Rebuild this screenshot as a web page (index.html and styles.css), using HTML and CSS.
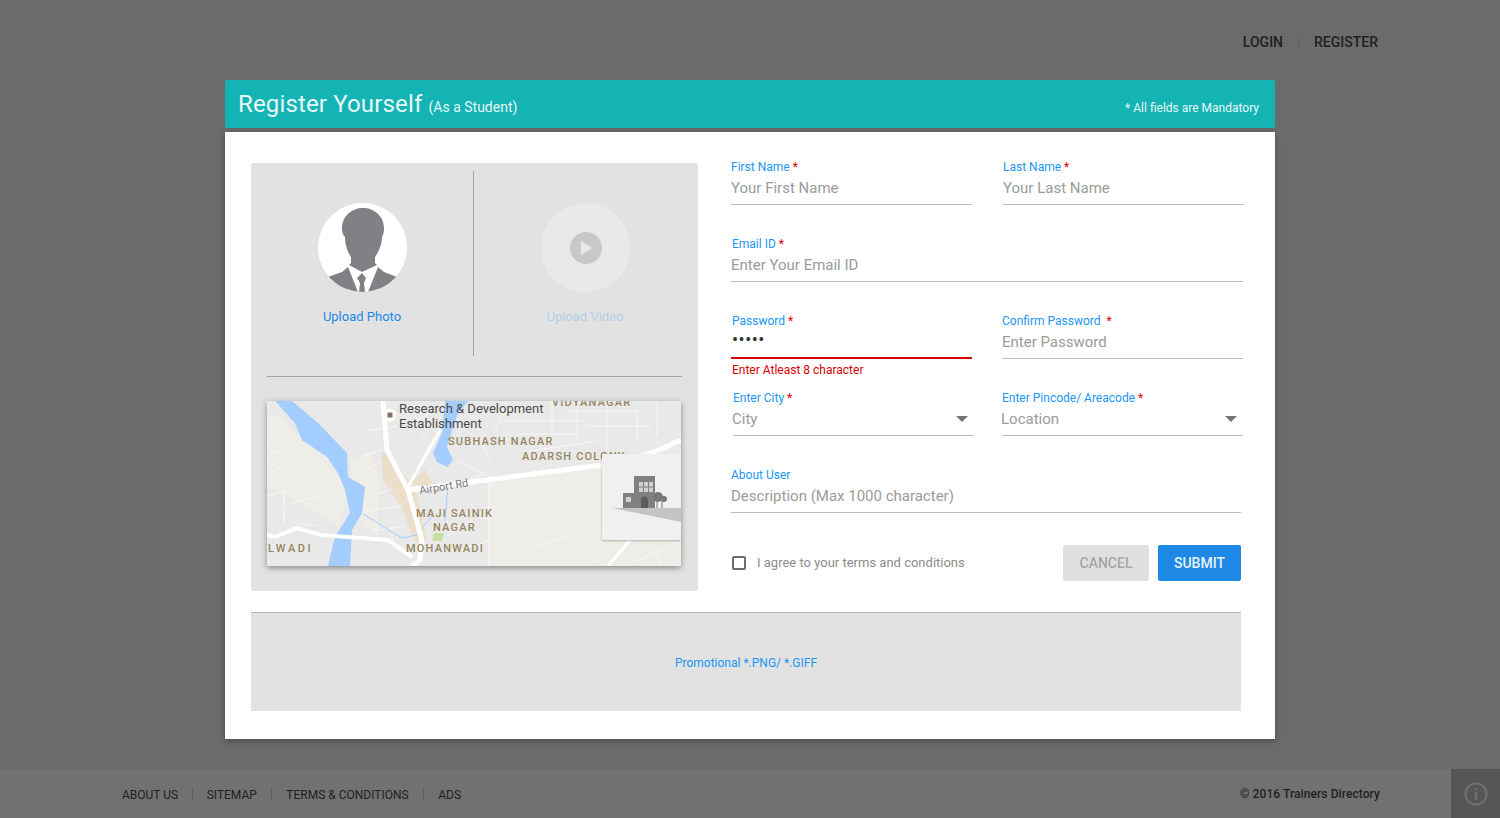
FILE: index.html
```html
<!DOCTYPE html>
<html lang="en">
<head>
  <meta charset="UTF-8" />
  <meta name="viewport" content="width=device-width, initial-scale=1.0"/>
  <title>Register Yourself</title>
  <link rel="stylesheet" href="styles.css">
</head>
<body>
  <header class="topbar">
    <a class="top-link">LOGIN</a>
    <span class="top-sep"></span>
    <a class="top-link">REGISTER</a>
  </header>

  <main class="modal">
    <div class="modal-title">
      <h1>Register Yourself <small>(As a Student)</small></h1>
      <span class="mandatory">* All fields are Mandatory</span>
    </div>

    <div class="card">
      <div class="card-top">
        <!-- Left: uploads and map -->
        <section class="media-panel">
          <div class="uploads">
            <div class="upload upload-photo">
              <svg class="disc" viewBox="0 0 89 89">
                <defs><clipPath id="disc-clip"><circle cx="44.5" cy="44.5" r="44.5"/></clipPath></defs>
                <circle cx="44.5" cy="44.5" r="44.5" fill="#fff"/>
                <g clip-path="url(#disc-clip)" fill="#808184">
                  <path d="M45 5C56 5 66 13 66 25C66 30 65 32 64 34C64 42 60 50 57 54L57 60L59 62L44 69L31 62L33 60L33 54C30 50 27 42 27 34C25 32 24 30 24 25C24 13 34 5 45 5Z"/>
                  <path d="M10 74L24 69L30 64L40 89L10 89Z"/>
                  <path d="M79 74L66 69L60 64L50 89L79 89Z"/>
                  <path d="M39 75L44 70L48 75L46 80L47 89L41 89L42 80Z"/>
                </g>
              </svg>
              <a class="upload-label">Upload Photo</a>
            </div>
            <div class="upload upload-video">
              <svg class="disc" viewBox="0 0 89 89">
                <circle cx="44.5" cy="44.5" r="44.5" fill="#e9e9e9"/>
                <circle cx="45" cy="45" r="16" fill="#c8c8c8"/>
                <path d="M40 38L51 45L40 52Z" fill="#e9e9e9"/>
              </svg>
              <a class="upload-label">Upload Video</a>
            </div>
          </div>

          <div class="map">
            <svg viewBox="0 0 414 165" width="414" height="165">
              <rect width="414" height="165" fill="#e9e9e9"/>
              <path d="M221 82L335 64L414 50V165H221Z" fill="#efede7"/>
              <path d="M0 15H12L35 39L60 56L80 90L72 125L30 100L0 85Z" fill="#efede7"/>
              <path d="M82 60L105 50L112 80L110 130L95 125Z" fill="#efede7"/>
              <path d="M114 52L124 52L150 95L160 140L148 140L134 105L116 78Z" fill="#ecdfc9"/>
              <path d="M142 84L158 68L166 84Z" fill="#ecdfc9"/>
              <path d="M167 132L177 132L175 140H165Z" fill="#c8dfa2"/>

              <g class="streets">
                <path d="M0 45L10 52L18 42M0 60L25 75M0 95L17 90L17 122M17 105L50 95L68 115M30 122L50 125"/>
                <path d="M100 30L130 25M98 55L115 48M95 70L115 60M105 95L125 88M100 110L135 105M105 130L140 125M110 120V140M125 125V140"/>
                <path d="M150 20L165 10M155 40L165 20M190 60L222 75M190 85L222 70M228 30L240 0M210 35L225 60"/>
                <path d="M240 20H320M250 33H310M262 50L330 40M285 0V50M310 0V40M340 0V45M370 10V40M390 0V35M300 10H375M320 25H385"/>
                <path d="M222 82V165M200 100L222 120M180 135L205 120M190 150L222 140"/>
                <path d="M300 150L340 130M320 165L350 140M370 160L414 140M385 150L395 165M270 145L300 135"/>
              </g>
              <g class="canals">
                <path d="M96 113L135 137L150 134L165 115M181 85L178 120"/>
              </g>

              <path d="M61 165L68 136L83 112L78 89L71 72L60 56L35 39L28 22L8 0H25L51 22L80 52L81 76L98 86L95 112L85 129L83 165Z" fill="#a3ccff"/>
              <path d="M178 0H201L191 12L185 29L180 46L186 59L180 66L170 61L166 52L175 32Z" fill="#a3ccff"/>

              <g class="roads">
                <path d="M116 0L120 49L141 89L155 139L153 159L145 165" stroke-width="5"/>
                <path d="M141 89L205 81L335 64L385 52L414 39" stroke-width="5"/>
                <path d="M173 29L141 86" stroke-width="3"/>
                <path d="M0 134L8 136L30 127L55 134L121 139L145 156" stroke-width="4"/>
                <path d="M341 165L363 139" stroke-width="3"/>
              </g>

              <circle cx="123" cy="14" r="6.5" fill="#fff"/>
              <rect x="120.5" y="11.500" width="5" height="5" fill="#8d6e63"/>

              <text class="poi" x="132" y="12">Research &amp; Development</text>
              <text class="poi" x="132" y="27">Establishment</text>
              <text class="area" x="285" y="5">VIDYANAGAR</text>
              <text class="area" x="181" y="44">SUBHASH NAGAR</text>
              <text class="area" x="255" y="59">ADARSH COLONY</text>
              <text class="road-name" transform="translate(153 93) rotate(-9)">Airport Rd</text>
              <text class="area" x="149" y="116">MAJI SAINIK</text>
              <text class="area" x="166" y="130">NAGAR</text>
              <text class="area area-wide" x="1" y="151">LWADI</text>
              <text class="area" x="139" y="151">MOHANWADI</text>

              <!-- building thumbnail in the corner -->
              <rect class="tile" x="335" y="53" width="79" height="86" fill="#f0f0f0"/>
              <path d="M345 107H414V121Z" fill="#c4c4c4"/>
              <rect x="356" y="92" width="11" height="15" fill="#808080"/>
              <rect x="359" y="96" width="5" height="5" fill="#d0d0d0"/>
              <rect x="367" y="75" width="21" height="32" fill="#808080"/>
              <path d="M372 81H386V91H372Z" fill="#d0d0d0"/>
              <path d="M376.500 81V91M381.500 81V91M372 86H386" stroke="#808080" stroke-width="1"/>
              <path d="M374 107V99A3.500 3.500 0 0 1 381 99V107Z" fill="#5c5c5c"/>
              <circle cx="391" cy="96" r="5" fill="#777"/>
              <circle cx="397" cy="98" r="3" fill="#777"/>
              <path d="M390 100V107M395 100V107" stroke="#777" stroke-width="1"/>
            </svg>
          </div>
        </section>

        <!-- Right: the form -->
        <form class="form">
          <div class="row">
            <div class="field">
              <label>First Name <em>*</em></label>
              <div class="control">Your First Name</div>
            </div>
            <div class="field field-last">
              <label>Last Name <em>*</em></label>
              <div class="control">Your Last Name</div>
            </div>
          </div>

          <div class="row">
            <div class="field field-wide">
              <label class="nudge">Email ID <em>*</em></label>
              <div class="control">Enter Your Email ID</div>
            </div>
          </div>

          <div class="row">
            <div class="field">
              <label class="nudge">Password <em>*</em></label>
              <div class="control control-error"><span class="dots">•••••</span></div>
              <p class="error">Enter Atleast 8 character</p>
            </div>
            <div class="field field-second">
              <label>Confirm Password &nbsp;<em>*</em></label>
              <div class="control">Enter Password</div>
            </div>
          </div>

          <div class="row">
            <div class="field field-city">
              <label>Enter City <em>*</em></label>
              <div class="control control-select">City<i class="caret"></i></div>
            </div>
            <div class="field field-area">
              <label>Enter Pincode/ Areacode <em>*</em></label>
              <div class="control control-select">Location<i class="caret"></i></div>
            </div>
          </div>

          <div class="row">
            <div class="field field-about">
              <label>About User</label>
              <div class="control">Description (Max 1000 character)</div>
            </div>
          </div>

          <div class="actions">
            <span class="checkbox"></span>
            <span class="agree">I agree to your terms and conditions</span>
            <button type="button" class="btn btn-cancel">CANCEL</button>
            <button type="button" class="btn btn-submit">SUBMIT</button>
          </div>
        </form>
      </div>

      <div class="promo">Promotional *.PNG/ *.GIFF</div>
    </div>
  </main>

  <footer class="footer">
    <nav class="footer-links">
      <a>ABOUT US</a>
      <a>SITEMAP</a>
      <a>TERMS &amp; CONDITIONS</a>
      <a>ADS</a>
    </nav>
    <span class="copyright">© 2016 Trainers Directory</span>
    <div class="info">
      <svg viewBox="0 0 24 24" width="24" height="24">
        <circle cx="12" cy="12" r="10.500" fill="none" stroke="#707070" stroke-width="2"/>
        <circle cx="12" cy="7" r="1.500" fill="#707070"/>
        <rect x="10.800" y="10" width="2.400" height="8" fill="#707070"/>
      </svg>
    </div>
  </footer>
</body>
</html>
```

FILE: styles.css
```css
* {
  box-sizing: border-box;
}

body {
  display: flex;
  flex-direction: column;
  height: 100vh;
  margin: 0;
  overflow: hidden;
  background: #6b6b6b;
  font-family: Roboto, 'Liberation Sans', sans-serif;
}

/* Top bar */
.topbar {
  display: flex;
  justify-content: flex-end;
  align-items: center;
  height: 80px;
  padding: 4px 122px 0 0;
}

.top-link {
  font-size: 14px;
  font-weight: 500;
  color: #1f1f1f;
}

.top-sep {
  width: 1px;
  height: 12px;
  margin: 2px 15px 0;
  background: #5e5e5e;
}

/* Modal */
.modal {
  width: 1050px;
  margin: 0 auto;
}

.modal-title {
  display: flex;
  justify-content: space-between;
  align-items: baseline;
  height: 48px;
  padding: 10px 16px 0 13px;
  background: #14b3b4;
  border-radius: 2px;
  color: #e6f8f8;
}

.modal-title h1 {
  margin: 0;
  font-size: 24px;
  font-weight: 400;
  letter-spacing: 0.15px;
}

.modal-title small {
  font-size: 14px;
  letter-spacing: 0;
}

.mandatory {
  font-size: 12px;
}

.card {
  margin-top: 4px;
  height: 607px;
  padding: 28px 34px 28px 26px;
  background: #fff;
  box-shadow: 0 2px 6px rgba(0, 0, 0, 0.3);
}

.card-top {
  display: flex;
  gap: 33px;
}

/* Uploads + map */
.media-panel {
  width: 447px;
  height: 428px;
  margin-top: 3px;
  padding: 8px 16px 0;
  background: #e2e2e2;
  border-radius: 3px;
}

.uploads {
  display: flex;
  height: 206px;
  padding-bottom: 20px;
  border-bottom: 1px solid #a3a3a3;
}

.upload {
  display: flex;
  flex-direction: column;
  align-items: center;
  padding-top: 32px;
}

.upload-photo {
  width: 207px;
  padding-right: 16px;
  border-right: 1px solid #a3a3a3;
}

.upload-video {
  width: 208px;
  padding-left: 14px;
}

.disc {
  width: 89px;
  height: 89px;
}

.upload-label {
  margin-top: 17px;
  font-size: 13px;
  line-height: 16px;
  color: #1e88e5;
}

.upload-video .upload-label {
  color: #b4cfe8;
}

.map {
  width: 414px;
  height: 165px;
  margin-top: 24px;
  box-shadow: 0 2px 6px rgba(0, 0, 0, 0.4);
}

.map svg {
  display: block;
}

.streets path {
  fill: none;
  stroke: #f7f7f7;
  stroke-width: 1;
}

.canals path {
  fill: none;
  stroke: #a3ccff;
  stroke-width: 1;
}

.roads path {
  fill: none;
  stroke: #fff;
}

.tile {
  filter: drop-shadow(0 1px 1px rgba(0, 0, 0, 0.25));
}

.poi {
  font-size: 13px;
  fill: #4a4a4a;
}

.area {
  font-size: 11px;
  font-weight: 500;
  letter-spacing: 1.2px;
  fill: #96865f;
}

.area-wide {
  letter-spacing: 2.6px;
}

.road-name {
  font-size: 11px;
  fill: #777;
}

/* Form */
.form {
  width: 513px;
}

.row {
  display: flex;
  height: 77px;
}

.field {
  width: 241px;
}

.field-last {
  margin-left: 31px;
}

.field-second {
  margin-left: 30px;
}

.field-wide {
  width: 512px;
}

.field-city {
  margin-left: 2px;
}

.field-area {
  margin-left: 28px;
}

.field-about {
  width: 510px;
}

label {
  display: block;
  height: 14px;
  font-size: 12px;
  line-height: 14px;
  color: #2196f3;
}

label.nudge {
  padding-left: 1px;
}

label em {
  font-style: normal;
  color: #e00000;
}

.control {
  position: relative;
  height: 31px;
  font-size: 15px;
  line-height: 29px;
  color: #9b9b9b;
  border-bottom: 1px solid #bdbdbd;
}

.control-error {
  border-bottom: 2px solid #d50000;
}

.dots {
  display: block;
  padding-left: 1px;
  font-size: 18px;
  line-height: 24px;
  letter-spacing: 0.5px;
  color: #333;
}

.error {
  margin: 4px 0 0;
  padding-left: 1px;
  font-size: 12px;
  line-height: 15px;
  color: #d50000;
}

.field-city .control {
  text-indent: -1px;
}

.field-area .control {
  text-indent: -1px;
}

.caret {
  position: absolute;
  top: 11px;
  right: 6px;
  width: 0;
  height: 0;
  border-left: 6px solid transparent;
  border-right: 6px solid transparent;
  border-top: 6px solid #757575;
}

.actions {
  display: flex;
  align-items: center;
  width: 510px;
  height: 36px;
}

.checkbox {
  width: 14px;
  height: 14px;
  margin-left: 1px;
  border: 2px solid #6e6e6e;
  border-radius: 2px;
}

.agree {
  margin-left: 11px;
  padding-bottom: 2px;
  font-size: 13px;
  color: #8c8c8c;
}

.btn {
  height: 36px;
  padding: 0;
  border: none;
  border-radius: 2px;
  font-family: inherit;
  font-size: 14px;
  font-weight: 500;
}

.btn-cancel {
  width: 86px;
  margin-left: auto;
  background: #e0e0e0;
  color: #a6a6a6;
}

.btn-submit {
  width: 83px;
  margin-left: 9px;
  background: #1e88e5;
  color: #e8f3fd;
}

/* Promo strip */
.promo {
  display: flex;
  justify-content: center;
  align-items: center;
  width: 990px;
  height: 99px;
  margin-top: 21px;
  padding-top: 2px;
  border-top: 1px solid #b5b5b5;
  background: #e2e2e2;
  font-size: 12px;
  color: #2196f3;
}

/* Footer */
.footer {
  display: flex;
  align-items: center;
  height: 49px;
  margin-top: auto;
  padding-left: 108px;
  background: #717171;
  font-size: 12px;
  color: #1f1f1f;
}

.footer-links {
  display: flex;
  padding-top: 2px;
}

.footer-links a {
  padding: 0 14.5px 0 14px;
  line-height: 12px;
  border-left: 1px solid #5c5c5c;
}

.footer-links a:first-child {
  padding-right: 13.5px;
  border-left: none;
}

.copyright {
  margin-left: auto;
  margin-right: 71px;
  font-weight: 500;
  letter-spacing: 0.08px;
}

.info {
  display: flex;
  justify-content: center;
  align-items: center;
  width: 49px;
  height: 49px;
  background: #555657;
}
```
